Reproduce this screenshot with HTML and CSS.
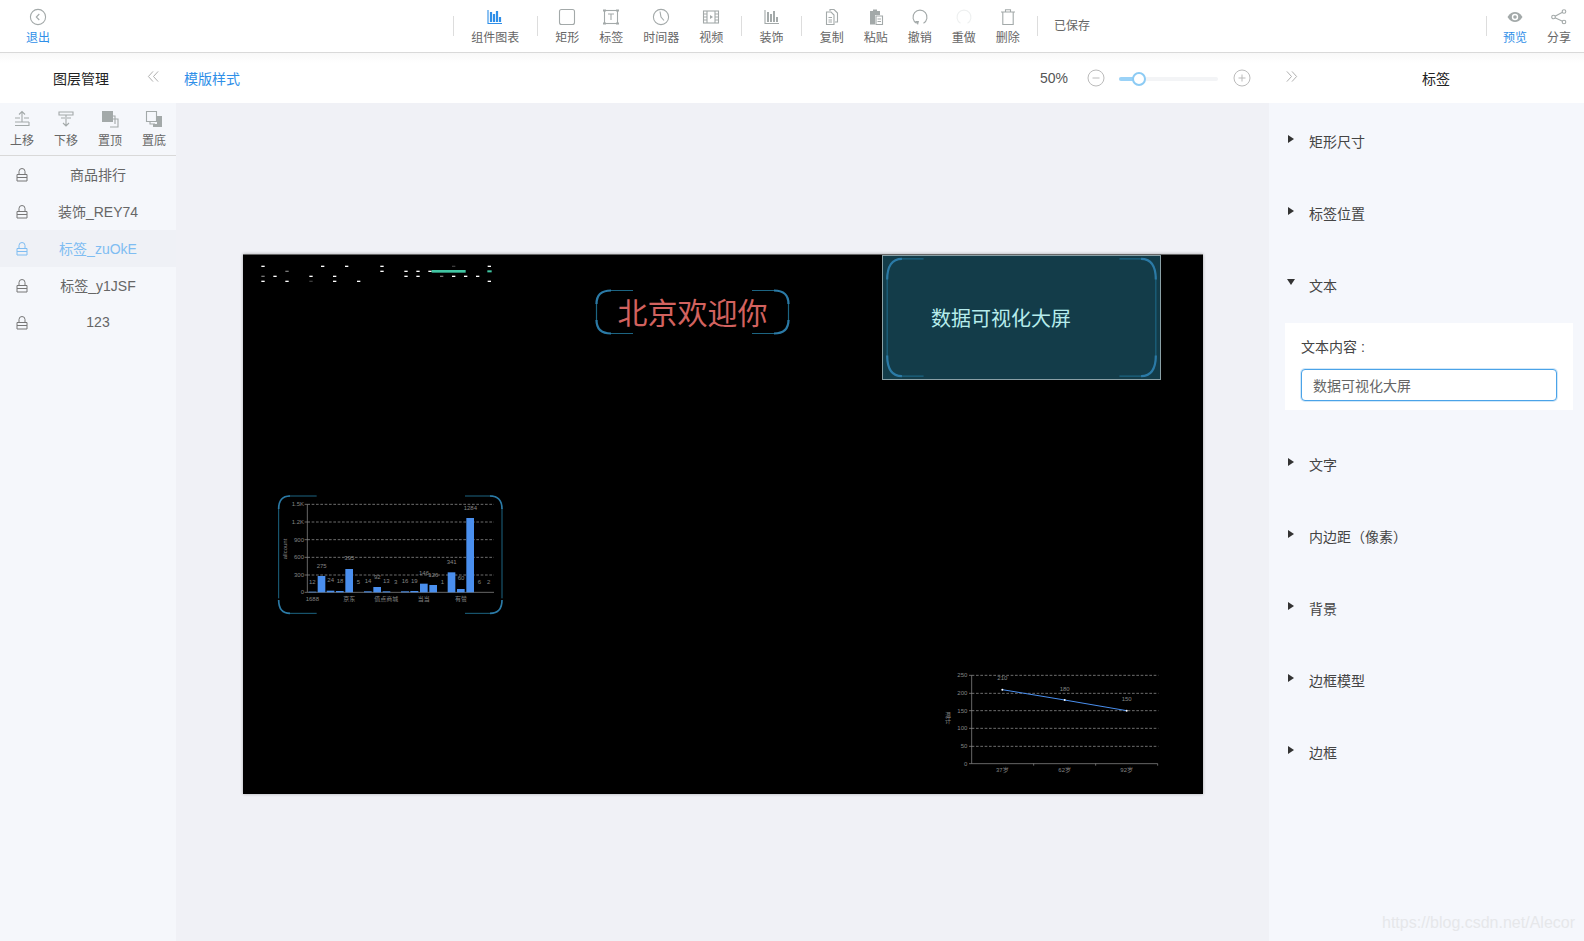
FILE: index.html
```html
<!DOCTYPE html>
<html lang="zh-CN">
<head>
  <meta charset="UTF-8">
  <meta name="viewport" content="width=device-width, initial-scale=1.0">
  <title>大屏编辑器</title>
  <link rel="stylesheet" href="styles.css">
</head>
<body>
<div class="topbar">
  <div class="tool exit blue">
    <svg class="ico" viewBox="0 0 18 18"><circle cx="9" cy="9" r="7.6"/><path d="M10.3 6 7.3 9l3 3"/></svg>
    <span>退出</span>
  </div>
  <div class="tool-group">
    <i class="sep"></i>
    <div class="tool wide">
      <svg class="ico on" viewBox="0 0 18 18"><path d="M2 2v13.5h14"/><path class="thick" d="M5 4v10M8 6v8M11 3v11M14 9v5"/></svg>
      <span>组件图表</span>
    </div>
    <i class="sep"></i>
    <div class="tool">
      <svg class="ico" viewBox="0 0 18 18"><rect x="1.5" y="1.5" width="15" height="15" rx="2"/></svg>
      <span>矩形</span>
    </div>
    <div class="tool">
      <svg class="ico" viewBox="0 0 18 18"><rect x="2.5" y="2.5" width="13" height="13"/><path d="M6 6h6M9 6v6"/><path class="thick" d="M1 2.5h3M14 2.5h3M1 15.5h3M14 15.5h3"/></svg>
      <span>标签</span>
    </div>
    <div class="tool wider">
      <svg class="ico" viewBox="0 0 18 18"><circle cx="9" cy="9" r="7.6"/><path d="M8 3.5 9 9l3 3.5"/></svg>
      <span>时间器</span>
    </div>
    <div class="tool">
      <svg class="ico" viewBox="0 0 18 18"><rect x="1.5" y="3" width="15" height="12"/><path d="M5 3v12M13 3v12M1.5 6H5M1.5 9H5M1.5 12H5M13 6h3.5M13 9h3.5M13 12h3.5"/><path class="solid" d="M8 7l3 2-3 2z"/></svg>
      <span>视频</span>
    </div>
    <i class="sep"></i>
    <div class="tool">
      <svg class="ico" viewBox="0 0 18 18"><path d="M2 2v13.5h14"/><path class="thick" d="M5 4v10M8 6v8M11 3v11M14 9v5"/></svg>
      <span>装饰</span>
    </div>
    <i class="sep"></i>
    <div class="tool">
      <svg class="ico" viewBox="0 0 18 18"><path d="M7 3V1.5h4L14.5 5v9H12"/><path d="M3.5 4H8l3 3v9.500H3.500z"/><path d="M5.500 9.500H9M5.500 12H9M5.500 14H9"/></svg>
      <span>复制</span>
    </div>
    <div class="tool">
      <svg class="ico" viewBox="0 0 18 18"><path class="solid" d="M3 3h3V1.500h4V3h3v4H8v9.500H3z"/><path d="M9 8h6.500v8.500H9zM10.500 11H14M10.500 13.500H14"/></svg>
      <span>粘贴</span>
    </div>
    <div class="tool">
      <svg class="ico" viewBox="0 0 18 18"><path d="M5.500 15.200A7 7 0 1 1 12.500 15.200"/><path class="solid" d="M4 13h4l-1 4z"/></svg>
      <span>撤销</span>
    </div>
    <div class="tool">
      <svg class="ico faint" viewBox="0 0 18 18"><path d="M5.500 15.200A7 7 0 1 1 12.500 15.200"/></svg>
      <span>重做</span>
    </div>
    <div class="tool">
      <svg class="ico" viewBox="0 0 18 18"><path d="M2 4h14M6.500 4V1.800h5V4M3.800 4v12.500h10.400V4"/></svg>
      <span>删除</span>
    </div>
    <i class="sep"></i>
    <span class="saved">已保存</span>
  </div>
  <div class="tool-group right">
    <i class="sep"></i>
    <div class="tool blue">
      <svg class="ico eye" viewBox="0 0 18 18"><path class="solid" d="M1.500 9C4 5 6.500 4 9 4s5 1 7.500 5c-2.500 4-5 5-7.500 5s-5-1-7.500-5z"/><circle class="hole" cx="9" cy="9" r="3.200"/><circle class="solid" cx="9" cy="9" r="1.800"/></svg>
      <span>预览</span>
    </div>
    <div class="tool">
      <svg class="ico" viewBox="0 0 18 18"><circle cx="14" cy="3.500" r="1.800"/><circle cx="3.500" cy="9" r="1.800"/><circle cx="14" cy="14" r="1.800"/><path d="M5 8.200l7.500-4M5 9.800l7.500 3.500"/></svg>
      <span>分享</span>
    </div>
  </div>
</div>

<div class="subbar">
  <div class="sub-left">
    <span class="sub-title">图层管理</span>
    <svg class="fold" viewBox="0 0 14 14"><path d="M6.500 1.500 1.500 7l5 5.500M12 1.500 7 7l5 5.500"/></svg>
  </div>
  <span class="tpl-link">模版样式</span>
  <div class="zoom-box">
    <span class="zoom-val">50%</span>
    <svg class="round-btn" viewBox="0 0 18 18"><circle cx="9" cy="9" r="8"/><path d="M5.500 9h7"/></svg>
    <div class="slider"><div class="slider-fill"></div><div class="slider-thumb"></div></div>
    <svg class="round-btn" viewBox="0 0 18 18"><circle cx="9" cy="9" r="8"/><path d="M5.500 9h7M9 5.500v7"/></svg>
  </div>
  <svg class="fold unfold" viewBox="0 0 14 14"><path d="M2 1.500 7 7l-5 5.500M7.500 1.500l5 5.500-5 5.500"/></svg>
  <span class="sub-right">标签</span>
</div>

<div class="body-row">
  <div class="layers">
    <div class="layer-tools">
      <div class="layer-tool">
        <svg class="ico" viewBox="0 0 18 18"><path d="M9 12V1.500M6 4.500l3-3 3 3M2 8h5M11 8h5M2 12h14M2 15.500h14V12"/></svg>
        <span>上移</span>
      </div>
      <div class="layer-tool">
        <svg class="ico" viewBox="0 0 18 18"><path d="M2 2h14v3H2zM4 8h4M10 8h4M9 5v11M6 13l3 3 3-3"/></svg>
        <span>下移</span>
      </div>
      <div class="layer-tool">
        <svg class="ico" viewBox="0 0 18 18"><path d="M6 6h8v8M9 9h8v8H9"/><path class="solid" d="M1 1h11v11H1z"/></svg>
        <span>置顶</span>
      </div>
      <div class="layer-tool">
        <svg class="ico" viewBox="0 0 18 18"><path d="M1.500 1.500h10v10h-10z"/><path d="M5 11.500V14h5"/><path class="solid" d="M12 6h5v11H8v-3h4z"/></svg>
        <span>置底</span>
      </div>
    </div>
    <div class="layer-row">
      <svg class="lock" viewBox="0 0 12 14"><path d="M3 6.500V3.500a3 3 0 0 1 6 0v3M1 6.500h10v6.500H1zM1 9.500h10"/></svg>
      <span>商品排行</span>
    </div>
    <div class="layer-row">
      <svg class="lock" viewBox="0 0 12 14"><path d="M3 6.500V3.500a3 3 0 0 1 6 0v3M1 6.500h10v6.500H1zM1 9.500h10"/></svg>
      <span>装饰_REY74</span>
    </div>
    <div class="layer-row active">
      <svg class="lock" viewBox="0 0 12 14"><path d="M3 6.500V3.500a3 3 0 0 1 6 0v3M1 6.500h10v6.500H1zM1 9.500h10"/></svg>
      <span>标签_zuOkE</span>
    </div>
    <div class="layer-row">
      <svg class="lock" viewBox="0 0 12 14"><path d="M3 6.500V3.500a3 3 0 0 1 6 0v3M1 6.500h10v6.500H1zM1 9.500h10"/></svg>
      <span>标签_y1JSF</span>
    </div>
    <div class="layer-row">
      <svg class="lock" viewBox="0 0 12 14"><path d="M3 6.500V3.500a3 3 0 0 1 6 0v3M1 6.500h10v6.500H1zM1 9.500h10"/></svg>
      <span>123</span>
    </div>
  </div>

  <div class="workspace">
    <div class="canvas">
      <svg class="node dashes" viewBox="0 0 780 120">
        <g fill="#fff">
          <rect x="49" y="41" width="10" height="4"/><rect x="228" y="41" width="10" height="4"/><rect x="300" y="41" width="10" height="4"/><rect x="406" y="41" width="10" height="4"/><rect x="728" y="41" width="10" height="4"/>
          <rect x="406" y="56" width="10" height="4"/><rect x="478" y="56" width="10" height="4"/><rect x="514" y="56" width="10" height="4"/><rect x="550" y="56" width="10" height="4"/>
          <rect x="85" y="71" width="10" height="4"/><rect x="193" y="71" width="10" height="4"/><rect x="264" y="71" width="10" height="4"/><rect x="478" y="71" width="10" height="4"/><rect x="514" y="71" width="10" height="4"/><rect x="621" y="71" width="10" height="4"/><rect x="657" y="71" width="10" height="4"/><rect x="693" y="71" width="10" height="4"/>
          <rect x="49" y="86" width="10" height="4"/><rect x="121" y="86" width="10" height="4"/><rect x="264" y="86" width="10" height="4"/><rect x="336" y="86" width="10" height="4"/><rect x="728" y="86" width="10" height="4"/>
        </g>
        <g fill="#777">
          <rect x="121" y="56" width="10" height="4"/><rect x="49" y="71" width="10" height="4"/><rect x="585" y="71" width="10" height="4"/><rect x="621" y="41" width="10" height="4" opacity=".5"/><rect x="193" y="86" width="10" height="4" opacity=".5"/>
        </g>
        <rect x="560" y="54" width="102" height="8" fill="#41c6a3"/>
        <rect x="727" y="55" width="13" height="6" fill="#41c6a3"/>
      </svg>

      <div class="node welcome">
        <svg class="frame" viewBox="0 0 195 46">
          <path class="frame-thin" d="M12 1.500h26M157 1.500h26M12 44.500h26M157 44.500h26M1.500 14v18M193.500 14v18"/>
          <path class="frame-thick" d="M1.500 15Q1.500 1.500 16 1.500M179 1.500Q193.500 1.500 193.500 15M1.500 31Q1.500 44.500 16 44.500M179 44.500Q193.500 44.500 193.500 31"/>
        </svg>
        <span>北京欢迎你</span>
      </div>

      <div class="node data-tag">
        <svg class="frame" viewBox="0 0 279 125">
          <path class="frame-thin" d="M14 3h26M239 3h26M14 122h26M239 122h26M3 20v85M276 20v85"/>
          <path class="frame-thick" d="M3 24Q3 3 18 3M261 3Q276 3 276 24M3 101Q3 122 18 122M261 122Q276 122 276 101"/>
        </svg>
        <span>数据可视化大屏</span>
      </div>

      <svg class="node bar-chart" viewBox="0 0 750 405">
        <path class="frame-thin" d="M55 33h85M585 33h85M55 385h85M585 385h85M26 70v270M696 70v270"/>
        <path class="frame-thick" d="M26 72Q26 33 60 33M660 33Q696 33 696 72M26 345Q26 385 60 385M660 385Q696 385 696 345"/>
        <path class="grid" d="M112 58h560M112 111h560M112 164h560M112 217h560M112 270h560"/>
        <path class="axis" d="M112 58v264h560M104 58h8M104 111h8M104 164h8M104 217h8M104 270h8M104 322h8"/>
        <g fill="#4a8fee">
          <rect x="116" y="320" width="23" height="2"/><rect x="143" y="273" width="23" height="49"/><rect x="170" y="317" width="23" height="5"/><rect x="198" y="318" width="23" height="4"/><rect x="226" y="252" width="23" height="70"/>
          <rect x="282" y="319" width="23" height="3"/><rect x="310" y="306" width="23" height="16"/><rect x="338" y="319" width="23" height="3"/><rect x="393" y="319" width="24" height="3"/><rect x="421" y="318" width="24" height="4"/>
          <rect x="450" y="296" width="23" height="26"/><rect x="478" y="300" width="23" height="22"/><rect x="533" y="262" width="23" height="60"/><rect x="561" y="312" width="23" height="10"/><rect x="589" y="99" width="23" height="223"/>
        </g>
        <g class="chart-text" text-anchor="middle">
          <text x="127" y="296">12</text><text x="155" y="248">275</text><text x="182" y="292">24</text><text x="210" y="293">18</text><text x="238" y="226">395</text><text x="265" y="296">5</text><text x="294" y="294">14</text><text x="322" y="281">92</text><text x="349" y="295">13</text><text x="377" y="296">3</text><text x="405" y="293">16</text><text x="433" y="293">19</text><text x="462" y="271">146</text><text x="490" y="275">126</text><text x="517" y="296">1</text><text x="545" y="236">341</text><text x="573" y="286">60</text><text x="601" y="74">1284</text><text x="628" y="296">6</text><text x="656" y="296">2</text>
          <text x="127" y="349">1688</text><text x="238" y="349">京东</text><text x="349" y="349">值点商城</text><text x="461" y="349">当当</text><text x="573" y="349">有赞</text>
        </g>
        <g class="chart-text" text-anchor="end">
          <text x="102" y="64">1.5K</text><text x="102" y="117">1.2K</text><text x="102" y="170">900</text><text x="102" y="223">600</text><text x="102" y="276">300</text><text x="102" y="328">0</text>
        </g>
        <text class="chart-text" transform="translate(50 192) rotate(-90)" text-anchor="middle">allcount</text>
      </svg>

      <svg class="node line-chart" viewBox="0 0 750 375">
        <path class="grid" d="M125 46h560M125 100h560M125 152h560M125 205h560M125 259h560"/>
        <path class="axis" d="M125 46v265h558M117 46h8M117 100h8M117 152h8M117 205h8M117 259h8M117 311h8M311 311v6M497 311v6M683 311v6"/>
        <path class="trend" d="M217 89 404 120 590 152"/>
        <g fill="#fff"><circle cx="217" cy="89" r="3"/><circle cx="404" cy="120" r="3"/><circle cx="590" cy="152" r="3"/></g>
        <g class="chart-text" text-anchor="middle">
          <text x="217" y="60">210</text><text x="404" y="92">180</text><text x="590" y="122">150</text>
          <text x="217" y="337">37岁</text><text x="404" y="337">62岁</text><text x="590" y="337">92岁</text>
          <text x="54" y="172">温</text><text x="54" y="190">计</text>
        </g>
        <g class="chart-text" text-anchor="end">
          <text x="112" y="52">250</text><text x="112" y="106">200</text><text x="112" y="158">150</text><text x="112" y="211">100</text><text x="112" y="265">50</text><text x="112" y="317">0</text>
        </g>
      </svg>
    </div>
  </div>

  <div class="props">
    <div class="prop-head"><i class="tri"></i>矩形尺寸</div>
    <div class="prop-head"><i class="tri"></i>标签位置</div>
    <div class="prop-head"><i class="tri down"></i>文本</div>
    <div class="prop-body">
      <div class="field-label">文本内容 :</div>
      <input class="field-input" type="text" value="数据可视化大屏">
    </div>
    <div class="prop-head"><i class="tri"></i>文字</div>
    <div class="prop-head"><i class="tri"></i>内边距（像素）</div>
    <div class="prop-head"><i class="tri"></i>背景</div>
    <div class="prop-head"><i class="tri"></i>边框模型</div>
    <div class="prop-head"><i class="tri"></i>边框</div>
  </div>
</div>
<div class="watermark">https://blog.csdn.net/Alecor</div>
</body>
</html>
```

FILE: styles.css
```css
* {
  margin: 0;
  padding: 0;
  box-sizing: border-box;
  font-family: "Liberation Sans", "Noto Sans CJK SC", sans-serif;
}

body {
  width: 1584px;
  height: 941px;
  overflow: hidden;
  background: #f0f1f6;
  color: #666;
  display: flex;
  flex-direction: column;
}

/* top toolbar */
.topbar {
  height: 53px;
  flex-shrink: 0;
  display: flex;
  background: #fff;
  border-bottom: 1px solid #d9d9d9;
}

.tool {
  width: 44px;
  height: 52px;
  padding-top: 8px;
  display: flex;
  flex-direction: column;
  align-items: center;
  font-size: 12px;
  line-height: 20px;
  color: #666;
}

.tool span { margin-top: 2px; }
.tool.wide { width: 68px; }
.tool.wider { width: 56px; }
.tool.blue, .tool.blue span { color: #2f8fe8; }

.tool.exit {
  margin-left: 16px;
}

.ico {
  width: 18px;
  height: 18px;
  flex-shrink: 0;
  fill: none;
  stroke: #a3a9a9;
  stroke-width: 1.1;
}

.ico .thick { stroke-width: 2; }
.ico .solid { fill: #a3a9a9; stroke: none; }
.ico .hole { fill: #fff; stroke: none; }
.ico.on { stroke: #2f8fe8; }
.ico.on .thick { stroke-width: 2.2; }
.ico.faint { stroke: #eef0f0; }

.tool-group {
  display: flex;
  align-items: center;
  margin-left: 385px;
}

.tool-group.right {
  margin-left: auto;
  padding-right: 3px;
}

.tool-group.right .sep { margin: 0 6px 0 0; }

.sep {
  width: 1px;
  height: 20px;
  margin: 0 7.6px;
  background: #ddd;
}

.saved {
  margin: 0 0 4px 8px;
  font-size: 12px;
  color: #666;
}

/* second bar */
.subbar {
  height: 50px;
  flex-shrink: 0;
  display: flex;
  align-items: center;
  background: linear-gradient(#f8f8f8, #fff 10px);
  font-size: 14px;
}

.sub-left {
  width: 184px;
  padding-left: 53px;
  display: flex;
  align-items: center;
}

.sub-title {
  color: #222;
  width: 94px;
}

.fold {
  width: 13px;
  height: 13px;
  fill: none;
  stroke: #aaa;
  stroke-width: 1;
}

.sub-left .fold { margin-top: -3px; }
.unfold { margin: -3px 0 0 34px; }

.tpl-link { color: #2f8fe8; }

.zoom-box {
  margin-left: 800px;
  display: flex;
  align-items: center;
}

.zoom-val {
  width: 47px;
  color: #555;
}

.round-btn {
  width: 18px;
  height: 18px;
  fill: none;
  stroke: #bbb;
  stroke-width: 1;
}

.slider {
  position: relative;
  width: 99px;
  height: 4px;
  margin: 2px 15px 0 14px;
  background: #f3f4f6;
  border-radius: 2px;
}

.slider-fill {
  width: 20px;
  height: 4px;
  background: #9ad2f7;
  border-radius: 2px;
}

.slider-thumb {
  position: absolute;
  left: 13px;
  top: -5px;
  width: 14px;
  height: 14px;
  background: #fff;
  border: 2px solid #8ccbf4;
  border-radius: 50%;
}

.sub-right {
  margin-left: 124px;
  color: #222;
}

/* main row */
.body-row {
  flex: 1;
  min-height: 0;
  display: flex;
}

.layers {
  width: 176px;
  flex-shrink: 0;
  background: #f5f7fb;
}

.layer-tools {
  height: 53px;
  padding-top: 7px;
  display: flex;
  border-bottom: 1px solid #d9d9d9;
}

.layer-tool {
  width: 44px;
  display: flex;
  flex-direction: column;
  align-items: center;
  font-size: 12px;
  line-height: 20px;
  color: #666;
}

.layer-tool span { margin-top: 3px; }

.layer-row {
  height: 37px;
  padding: 0 8px 0 16px;
  display: flex;
  align-items: center;
  font-size: 14px;
  color: #666;
}

.layer-row span {
  flex: 1;
  margin-top: -2px;
  text-align: center;
}

.lock {
  width: 12px;
  height: 14px;
  fill: none;
  stroke: #777;
  stroke-width: 1;
}

.layer-row.active {
  background: #eff1f6;
  color: #7fbdf2;
}

.layer-row.active .lock { stroke: #7fbdf2; }

.workspace {
  flex: 1;
  padding: 151px 0 0 67px;
}

.canvas {
  position: relative;
  width: 960px;
  height: 540px;
  background: #000;
  border-top: 1px solid #666;
  box-shadow: 0 0 3px rgba(0, 0, 0, 0.3);
}

.node {
  position: absolute;
}

.dashes {
  left: 2px;
  top: -3px;
  width: 260px;
  height: 40px;
}

.frame {
  position: absolute;
  left: 0;
  top: 0;
  width: 100%;
  height: 100%;
}

.frame-thin {
  fill: none;
  stroke: #1c6482;
  stroke-width: 1.2;
}

.frame-thick {
  fill: none;
  stroke: #2b7aa6;
  stroke-width: 2.2;
}

.welcome {
  left: 352px;
  top: 34px;
  width: 195px;
  height: 46px;
  padding-bottom: 3px;
  display: flex;
  align-items: center;
  justify-content: center;
  font-size: 30px;
  color: #d2625f;
}

.data-tag {
  left: 639px;
  top: 0;
  width: 279px;
  height: 125px;
  padding: 0 0 1px 48px;
  display: flex;
  align-items: center;
  background: #133c49;
  border: 1px solid #8aa0a6;
  font-size: 20px;
  color: #b6ecec;
}

.bar-chart {
  left: 27px;
  top: 230px;
  width: 250px;
  height: 135px;
}

.bar-chart .frame-thick { stroke-width: 5; }
.bar-chart .frame-thin { stroke-width: 3; }

.line-chart {
  left: 687px;
  top: 405px;
  width: 250px;
  height: 125px;
}

.grid {
  fill: none;
  stroke: #a5a5a5;
  stroke-width: 2;
  stroke-dasharray: 8 5;
}

.axis {
  fill: none;
  stroke: #999;
  stroke-width: 2;
}

.trend {
  fill: none;
  stroke: #4a8fee;
  stroke-width: 3;
}

.chart-text text, text.chart-text {
  font-size: 18px;
  fill: #858585;
}

/* right panel */
.props {
  width: 315px;
  flex-shrink: 0;
  padding: 2px 11px 0 16px;
  background: #f5f7fc;
}

.prop-head {
  height: 72px;
  display: flex;
  align-items: center;
  font-size: 14px;
  color: #444;
}

.tri {
  width: 0;
  height: 0;
  margin: -5px 15px 0 3px;
  border-top: 4px solid transparent;
  border-bottom: 4px solid transparent;
  border-left: 6px solid #333;
}

.tri.down {
  margin: -7px 14px 0 2px;
  border-left: 4.5px solid transparent;
  border-right: 4.5px solid transparent;
  border-top: 6px solid #333;
  border-bottom: 0;
}

.prop-body {
  height: 87px;
  margin: 2px 0 18px 0;
  padding: 14px 16px 0;
  background: #fff;
}

.field-label {
  font-size: 14px;
  line-height: 20px;
  color: #444;
}

.field-input {
  display: block;
  width: 256px;
  height: 32px;
  margin-top: 12px;
  padding: 0 11px;
  border: 1px solid #4aa3e8;
  border-radius: 4px;
  box-shadow: 0 0 0 1px rgba(74, 163, 232, 0.25);
  font-size: 14px;
  color: #666;
  outline: none;
}

.watermark {
  position: absolute;
  right: 9px;
  bottom: 9px;
  font-size: 16px;
  color: #e6e7ea;
}
```
